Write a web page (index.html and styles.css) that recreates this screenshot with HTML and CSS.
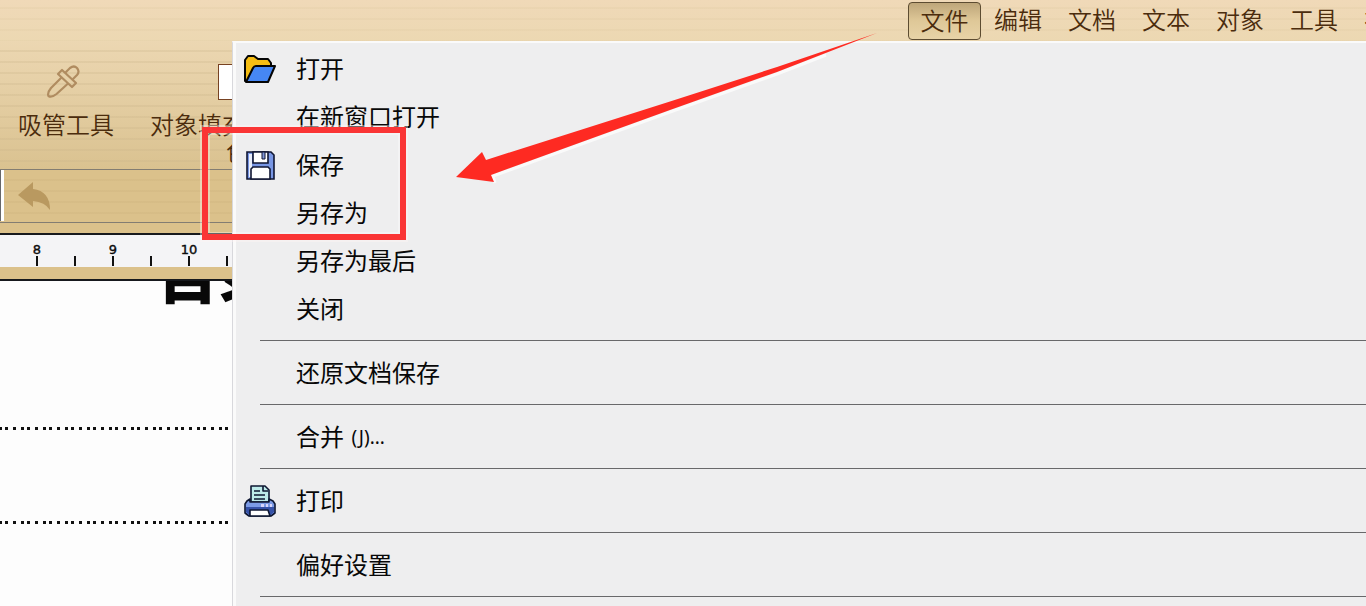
FILE: index.html
```
<!DOCTYPE html>
<html lang="zh-CN">
<head>
<meta charset="utf-8">
<title>文档编辑器</title>
<link rel="stylesheet" href="styles.css">
</head>
<body>
<div class="app">
  <nav class="menubar">
    <span class="menu-name active">文件</span><span class="menu-name">编辑</span><span class="menu-name">文档</span><span class="menu-name">文本</span><span class="menu-name">对象</span><span class="menu-name">工具</span><span class="menu-name">视图</span>
  </nav>
  <div class="toolbar">
    <div class="tool">
      <svg class="dropper" width="36" height="36" viewBox="0 0 36 36" fill="none" stroke="#b08c60" stroke-width="2.2" stroke-linejoin="round" stroke-linecap="round"><path d="M15 14 5 24q-4 5-2.500 8 3 2 8-2l11-10"/><path d="m12 10 4-4 14 13-4 4z"/><path d="m20 8 4-4q4-3 7 0 3 3.500 0 7l-4 4"/></svg>
      <span>吸管工具</span>
    </div>
    <div class="tool fill-tool">
      <div class="swatch"></div>
      <span>对象填充</span>
      <span class="second-line">色</span>
    </div>
  </div>
  <div class="editbar">
    <div class="field-end"></div>
    <svg width="34" height="30" viewBox="0 0 34 30"><path fill="#b99960" d="M0 13 15 0v7q17 2 17 21-5-8-17-9v6z"/></svg>
  </div>
  <div class="strip"></div>
  <div class="ruler"><span>8</span><span class="half"></span><span>9</span><span class="half"></span><span>10</span><span class="half"></span></div>
  <div class="strip lower"></div>
  <main class="page">
    <h1>目录</h1>
    <div class="leader"></div>
    <div class="leader"></div>
  </main>
</div>

<div class="menu">
  <div class="item"><svg width="34" height="30" viewBox="0 0 34 30" stroke="#050505" stroke-width="2" stroke-linejoin="round"><path fill="#f5bd13" d="M2 27V6l3-4h6l4 3h10l3 4v5L8 27z"/><path fill="#4687f4" d="m3 28 7-14q1-2 3-2h19l-7 16z"/></svg>打开</div>
  <div class="item"><i></i>在新窗口打开</div>
  <div class="item"><svg width="34" height="30" viewBox="0 0 34 30"><path fill="#7896e4" stroke="#101632" stroke-width="1.600" d="M4 2h24l3 3v24H4z"/><path fill="#e8edfb" d="M6 4h3v23H6z"/><path fill="#fff" stroke="#101632" stroke-width="1.600" d="M10 2h15v11H10zM8 29V19l2-2h15l2 2v10z"/><path fill="#8096d8" stroke="#101632" d="M19 2h3v7h-3z"/></svg>保存</div>
  <div class="item"><i></i>另存为</div>
  <div class="item"><i></i>另存为最后</div>
  <div class="item"><i></i>关闭</div>
  <hr>
  <div class="item"><i></i>还原文档保存</div>
  <hr>
  <div class="item"><i></i>合并 <small>(J)...</small></div>
  <hr>
  <div class="item"><svg width="34" height="34" viewBox="0 0 34 34" stroke="#0e1732" stroke-width="1.600" stroke-linejoin="round"><path fill="#bdeae9" d="M8 18V2h14l4 4v12z"/><path fill="none" d="M20 2v5h5M11 7h6M11 11h11M11 15h11"/><path fill="#7c9be6" d="m4 17 3-2v3h19v-3l4 2 2 3v9l-4 3H6l-4-3v-9z"/><path fill="#3652a8" stroke="none" d="M3 23h28v5l-3 3H6l-3-3z"/><path fill="#fff" d="M7 26h18l2 6H7z"/><path stroke="none" fill="#d7d5fb" d="M18 20h3v3h-3zM23 20h2v3h-2zM27 20h2v3h-2z"/></svg>打印</div>
  <hr>
  <div class="item"><i></i>偏好设置</div>
  <hr>
</div>

<div class="highlight"></div>
<svg class="arrow" width="426" height="154" viewBox="0 0 426 154"><path fill="none" stroke="#fafafa" stroke-width="3" d="m39 150-2-7L214 79 321 41 370 22"/><path fill="#fe2a22" d="M0 144 26 119l4 8L214 68.500 321 34 421 0 321 39 214 77 35 142l3 7z"/></svg>
</body>
</html>
```

FILE: styles.css
```
* { box-sizing: border-box; }
body {
  margin: 0;
  width: 1366px;
  height: 606px;
  overflow: hidden;
  position: relative;
  background: #fdfdfd;
  color: #080808;
  font: 24px/36px "Noto Sans CJK SC", sans-serif;
}
.app {
  display: flex;
  flex-direction: column;
  height: 606px;
  overflow: hidden;
}
.menubar, .toolbar {
  color: #4b2c0d;
  font-weight: 350;
}
.menubar {
  flex: none;
  height: 41px;
  display: flex;
  gap: 2px;
  padding: 2px 0 0 908px;
  background: repeating-linear-gradient(#ebd5af00 0 7px, #dfcaa288 8px, #ebd5af00 9px 11px), linear-gradient(#f0d9b8, #ecd8b2);
  white-space: nowrap;
}
.menu-name {
  flex: none;
  width: 72px;
  height: 38px;
  text-align: center;
  line-height: 34px;
}
.active {
  width: 73px;
  margin-right: -1px;
  line-height: 34px;
  border: 1.500px solid #5d4c31;
  border-radius: 4px;
  background: linear-gradient(#bea67a, #dfc898 50%, #e8d3a7);
}
.toolbar {
  flex: none;
  height: 128px;
  display: flex;
  padding: 22px 0 0 18px;
  gap: 36px;
  background: repeating-linear-gradient(#ead6af00 0 9px, #c9b38888 10px, #ead6af00 11px), linear-gradient(#ecd7b2, #dac290);
}
.tool {
  width: 96px;
  display: flex;
  flex-direction: column;
  align-items: center;
  white-space: nowrap;
  line-height: 28px;
}
.dropper { margin: 1px 0 10px -4px; }
.fill-tool { align-items: flex-start; }
.swatch {
  width: 40px;
  height: 36px;
  margin: 1px 0 10px 68px;
  border: 1px solid #774222;
  background: #fff;
}
.second-line {
  margin-left: 76px;
  line-height: 26px;
}
.editbar {
  flex: none;
  height: 53px;
  display: flex;
  gap: 14px;
  border-top: 1px solid #837d72;
  background: repeating-linear-gradient(#dbc18b00 0 9px, #c3a87360 10px, #dbc18b00 11px), #dbc18b;
}
.editbar svg { margin-top: 12px; }
.field-end {
  width: 4px;
  height: 51px;
  background: #fff;
  border-left: 1px solid #66676a;
}
.strip {
  flex: none;
  height: 13px;
  border-top: 1px solid #837d72;
  border-bottom: 2px solid #17191d;
  background: #dbc18b;
}
.strip.lower {
  height: 14px;
  border-top: 0;
}
.ruler {
  flex: none;
  height: 32px;
  display: flex;
  padding-left: 18px;
  background: #f4f4f6;
  font: 500 13px/16px "DejaVu Sans", sans-serif;
  -webkit-text-stroke: 0.4px #111;
}
.ruler span {
  flex: none;
  width: 38px;
  padding-top: 7px;
  text-align: center;
  background: linear-gradient(#111, #111) 18px 21px / 2px 10px no-repeat;
}
.page {
  flex: 1;
  overflow: hidden;
  background: #fdfdfd;
}
.page h1 {
  margin: -37px 0 93px 158px;
  height: 90px;
  font-size: 60px;
  line-height: 58px;
  font-weight: 900;
}
.leader {
  height: 3px;
  margin: 0 0 91px;
  background: repeating-linear-gradient(90deg, #111 0 3px, #fdfdfd 3px 8px, #111 8px 11px, #fdfdfd 11px 14px, #111 14px 17px, #fdfdfd 17px 22px);
  background-position-x: -9px;
}
.menu {
  position: absolute;
  left: 232px;
  top: 41px;
  width: 1134px;
  height: 565px;
  padding-top: 2px;
  border-left: 1px solid #d8d8dc;
  border-top: 2px solid #fafafa;
  box-shadow: inset 3px 0 #fafafa;
  background: #eeeeef;
  overflow: hidden;
}
.item {
  height: 48px;
  display: flex;
  align-items: center;
  gap: 19px;
  padding: 0 0 2px 10px;
  white-space: pre;
}
.item svg {
  position: relative;
  top: 1px;
}
.item svg, .item i { width: 34px; flex: none; }
.item small {
  margin-left: -17px;
  padding-top: 2px;
  font: 19px/24px "Noto Sans", sans-serif;
}
.menu hr {
  height: 1px;
  margin: 7px 0 8px 27px;
  border: 0;
  background: #68686a;
}
.highlight {
  position: absolute;
  left: 202px;
  top: 127px;
  width: 204px;
  height: 113px;
  border: 6px solid #fa3535;
  box-shadow: 0 0 0 2px #fff5f566, inset 0 0 0 2px #ffffff55;
}
.arrow {
  position: absolute;
  left: 456px;
  top: 33px;
}
```
